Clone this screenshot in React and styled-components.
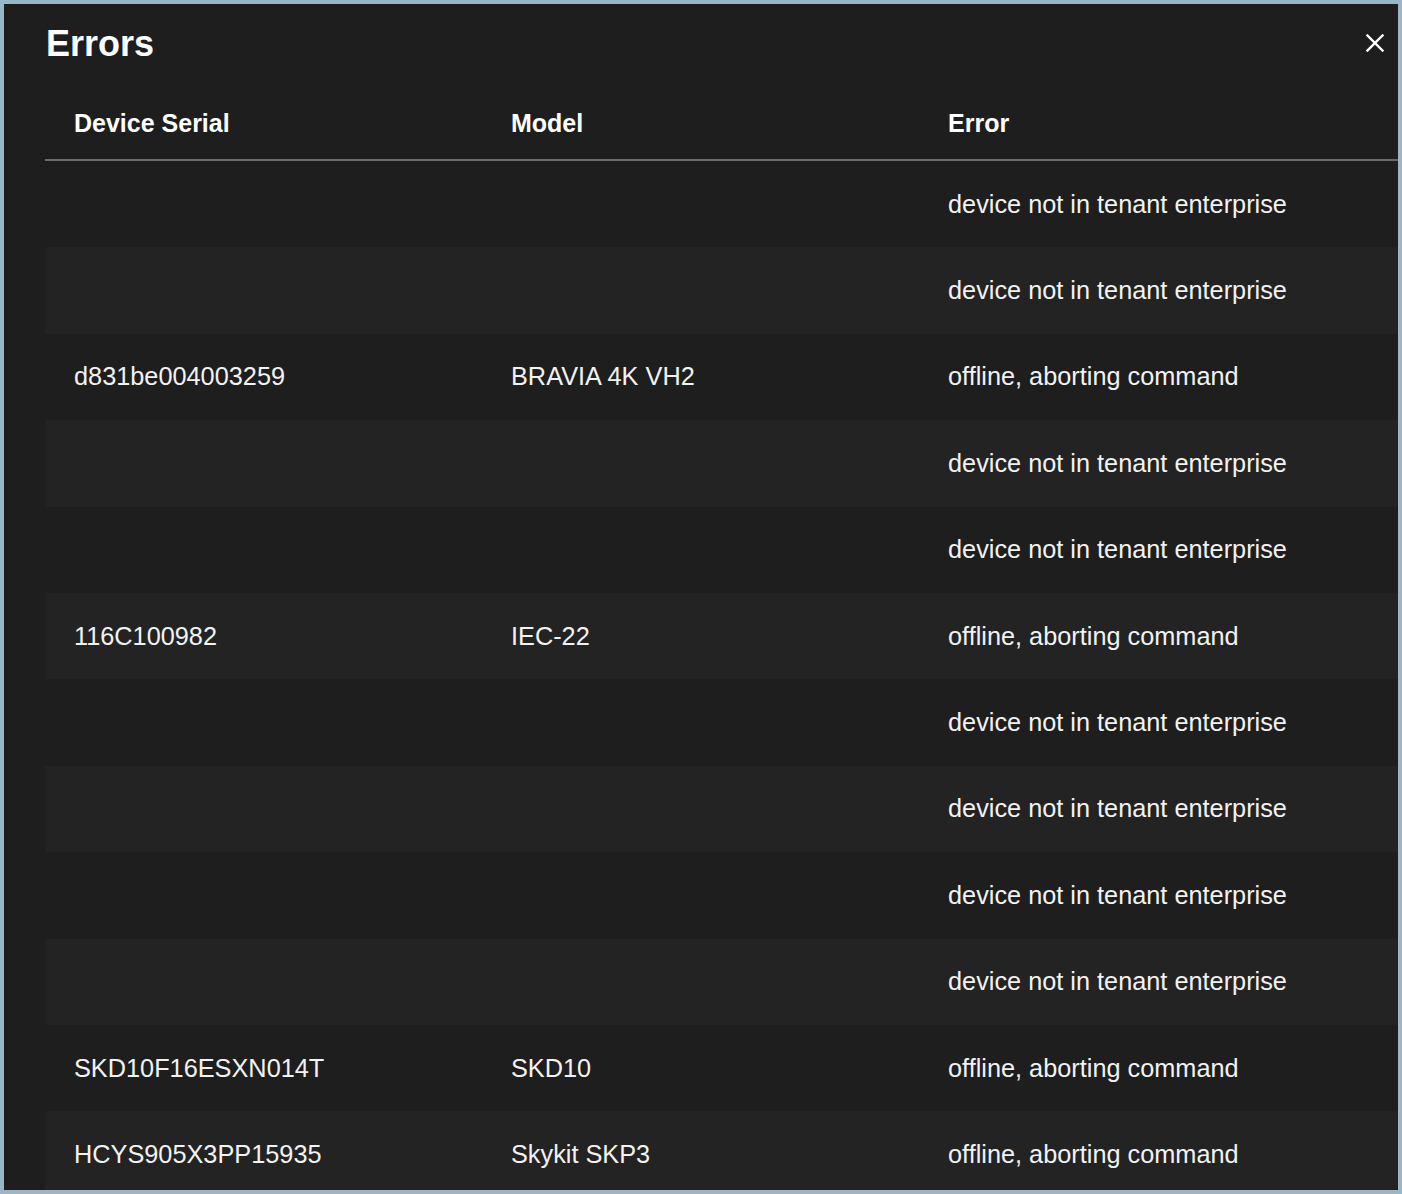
import React from 'react'
import styled, { createGlobalStyle } from 'styled-components'

const GlobalStyle = createGlobalStyle`
  html, body {
    margin: 0;
    padding: 0;
    background: #9bb6c5;
  }
  body {
    font-family: 'Liberation Sans', Arial, Helvetica, sans-serif;
    -webkit-font-smoothing: antialiased;
  }
`

const Modal = styled.div`
  margin: 4px;
  height: 1186px;
  background: #1e1e1e;
  color: #ffffff;
  overflow: hidden;
  display: flex;
  flex-direction: column;
`

const TitleBar = styled.div`
  height: 83px;
  flex-shrink: 0;
  box-sizing: border-box;
  padding: 0 11px 3px 42px;
  display: flex;
  align-items: center;
  justify-content: space-between;
`

const Title = styled.h2`
  margin: 0;
  font-size: 36px;
  font-weight: 700;
  line-height: 1;
`

const CloseButton = styled.button`
  width: 24px;
  height: 24px;
  padding: 0;
  border: 0;
  background: transparent;
  color: #ffffff;
  cursor: pointer;
  display: flex;
  align-items: center;
  justify-content: center;
  margin-bottom: 2px;
`

const Table = styled.div`
  margin-left: 41px;
  flex-shrink: 0;
  display: flex;
  flex-direction: column;
`

const Row = styled.div`
  display: grid;
  grid-template-columns: 437px 437px 1fr;
  align-items: center;
  height: ${(p) => (p.$head ? '72px' : '86.4px')};
  flex-shrink: 0;
  background: ${(p) => (p.$striped ? '#232323' : 'transparent')};
  border-bottom: ${(p) => (p.$head ? '2px solid #6a6a6a' : '0')};
`

const Cell = styled.div`
  padding-left: 29px;
  font-size: ${(p) => (p.$head ? '25px' : '25.3px')};
  font-weight: ${(p) => (p.$head ? 700 : 400)};
  color: ${(p) => (p.$head ? '#ffffff' : '#f2f2f2')};
  white-space: nowrap;
  line-height: 1.15;
`

const NOT_IN = 'device not in tenant enterprise'
const OFFLINE = 'offline, aborting command'

const errors = [
  { serial: '', model: '', error: NOT_IN },
  { serial: '', model: '', error: NOT_IN },
  { serial: 'd831be004003259', model: 'BRAVIA 4K VH2', error: OFFLINE },
  { serial: '', model: '', error: NOT_IN },
  { serial: '', model: '', error: NOT_IN },
  { serial: '116C100982', model: 'IEC-22', error: OFFLINE },
  { serial: '', model: '', error: NOT_IN },
  { serial: '', model: '', error: NOT_IN },
  { serial: '', model: '', error: NOT_IN },
  { serial: '', model: '', error: NOT_IN },
  { serial: 'SKD10F16ESXN014T', model: 'SKD10', error: OFFLINE },
  { serial: 'HCYS905X3PP15935', model: 'Skykit SKP3', error: OFFLINE },
]

const CloseIcon = () => (
  <svg width='18' height='18' viewBox='0 0 18 18'>
    <path d='M1.5 1.5 L16.5 16.5 M16.5 1.5 L1.5 16.5' stroke='currentColor' strokeWidth='2.4' strokeLinecap='square' />
  </svg>
)

const App = () => {
  return (
    <>
      <GlobalStyle />
      <Modal>
        <TitleBar>
          <Title>Errors</Title>
          <CloseButton aria-label='Close'>
            <CloseIcon />
          </CloseButton>
        </TitleBar>
        <Table>
          <Row $head>
            <Cell $head>Device Serial</Cell>
            <Cell $head>Model</Cell>
            <Cell $head>Error</Cell>
          </Row>
          {errors.map((item, i) => (
            <Row key={i} $striped={i % 2 === 1}>
              <Cell>{item.serial}</Cell>
              <Cell>{item.model}</Cell>
              <Cell>{item.error}</Cell>
            </Row>
          ))}
        </Table>
      </Modal>
    </>
  )
}

export default App
